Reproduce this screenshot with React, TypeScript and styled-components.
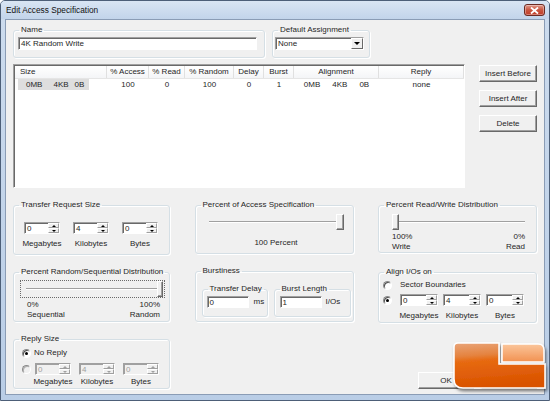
import * as React from 'react';
import styled, { createGlobalStyle } from 'styled-components';

const GlobalStyle = createGlobalStyle`
  html, body {
    margin: 0;
    padding: 0;
    background: #fff;
  }
  body {
    font-family: 'Liberation Sans', Arial, sans-serif;
    font-size: 8px;
    line-height: 10px;
    color: #262626;
  }
  * {
    box-sizing: border-box;
  }
`;

const Window = styled.div`
  position: relative;
  width: 550px;
  height: 401px;
  display: flex;
  flex-direction: column;
  background: linear-gradient(#cddcee, #b9cde6);
  border: 1px solid #4d5f78;
  border-radius: 5px 5px 0 0;
  overflow: hidden;
`;

const TitleBar = styled.div`
  height: 18px;
  display: flex;
  align-items: center;
  justify-content: space-between;
  padding: 0 4px 0 5px;
  background: linear-gradient(#d9e5f3, #c2d4ea);
`;

const Title = styled.span`
  font-size: 8.3px;
  color: #111;
`;

const CloseButton = styled.div`
  width: 21px;
  height: 12px;
  border: 1px solid #6b2a22;
  border-radius: 3px;
  background: linear-gradient(#e19a8c, #c9553f 50%, #c03c28);
  box-shadow: inset 0 0 0 1px rgba(255, 255, 255, 0.35);
  display: flex;
  align-items: center;
  justify-content: center;
`;

const Client = styled.div`
  flex: 1;
  margin: 0 4px 5px 4px;
  border: 1px solid #8a9cb5;
  background: #f0f0f0;
  padding: 5px 7px 0 7px;
  display: flex;
  flex-direction: column;
`;

const TopRow = styled.div`
  display: flex;
  gap: 7px;
`;

const Group = styled.fieldset<{ $w?: number; $h: number }>`
  margin: 0;
  padding: 0;
  min-width: 0;
  width: ${(p) => (p.$w ? `${p.$w}px` : 'auto')};
  height: ${(p) => p.$h}px;
  border: 1px solid #d5dfe5;
  border-radius: 3px;
  box-shadow: inset 1px 1px 0 #fff, 1px 1px 0 #fff;
`;

const Legend = styled.legend`
  margin-left: 5px;
  padding: 0 2px;
  height: 10px;
  line-height: 10px;
`;

const Body = styled.div<{ $pad: string }>`
  padding: ${(p) => p.$pad};
`;

const Field = styled.div<{ $w: number; $h?: number; $disabled?: boolean }>`
  width: ${(p) => p.$w}px;
  height: ${(p) => p.$h || 12}px;
  flex: none;
  display: flex;
  align-items: stretch;
  background: ${(p) => (p.$disabled ? '#f0f0f0' : '#fff')};
  color: ${(p) => (p.$disabled ? '#a0a0a0' : '#262626')};
  border: 1px solid;
  border-color: #a0a0a0 #fff #fff #a0a0a0;
  box-shadow: inset 1px 1px 0 ${(p) => (p.$disabled ? '#a0a0a0' : '#696969')};
  white-space: nowrap;
`;

const FieldText = styled.span`
  flex: 1;
  padding: 1px 0 0 2px;
  line-height: 10px;
`;

const DropButton = styled.div`
  width: 12px;
  background: #f0f0f0;
  border: 1px solid;
  border-color: #fff #696969 #696969 #fff;
  display: flex;
  align-items: center;
  justify-content: center;
  &::after {
    content: '';
    border-left: 3px solid transparent;
    border-right: 3px solid transparent;
    border-top: 3px solid #000;
  }
`;

const SpinButtons = styled.div`
  width: 11px;
  display: flex;
  flex-direction: column;
`;

const SpinHalf = styled.div<{ $up?: boolean; $disabled?: boolean }>`
  flex: 1;
  background: #f0f0f0;
  border: 1px solid;
  border-color: #fff #a0a0a0 #a0a0a0 #fff;
  display: flex;
  align-items: center;
  justify-content: center;
  &::after {
    content: '';
    border-left: 2px solid transparent;
    border-right: 2px solid transparent;
    ${(p) => (p.$up ? 'border-bottom' : 'border-top')}: 2px solid ${(p) => (p.$disabled ? '#a0a0a0' : '#000')};
  }
`;

const MidRow = styled.div`
  display: flex;
  margin-top: 6px;
`;

const ListView = styled.div`
  width: 452px;
  height: 124px;
  background: #fff;
  border: 1px solid;
  border-color: #a0a0a0 #fff #fff #a0a0a0;
  box-shadow: inset 1px 1px 0 #696969;
  padding: 1px 0 0 1px;
`;

const cols = '92px 42px 36px 49px 30px 30px 85px 85px';

const HeaderRow = styled.div`
  display: grid;
  grid-template-columns: ${cols};
  height: 13px;
  background: linear-gradient(#fff, #f4f5f7);
  border-bottom: 1px solid #e5e5e5;
`;

const HeaderCell = styled.div<{ $left?: boolean }>`
  border-right: 1px solid #e0e0e0;
  text-align: ${(p) => (p.$left ? 'left' : 'center')};
  padding-left: ${(p) => (p.$left ? '5px' : '0')};
  line-height: 12px;
  white-space: nowrap;
`;

const DataRow = styled.div`
  display: grid;
  grid-template-columns: ${cols};
  height: 11px;
  line-height: 11px;
`;

const Cell = styled.div`
  text-align: center;
  white-space: nowrap;
  display: flex;
  justify-content: center;
  gap: 12px;
`;

const Selection = styled.div`
  margin-left: 3px;
  width: 71px;
  background: #dedede;
  display: flex;
  padding-left: 8px;
  white-space: nowrap;
`;

const Gap = styled.span<{ $w: number }>`
  margin-left: ${(p) => p.$w}px;
`;

const ButtonCol = styled.div`
  display: flex;
  flex-direction: column;
  gap: 8px;
  margin: 1px 0 0 14px;
`;

const Button = styled.div<{ $w?: number }>`
  width: ${(p) => p.$w || 58}px;
  height: 17px;
  background: #f0f0f0;
  border: 1px solid;
  border-color: #fff #696969 #696969 #fff;
  box-shadow: inset -1px -1px 0 #a0a0a0;
  display: flex;
  align-items: center;
  justify-content: center;
  white-space: nowrap;
`;

const LowerGrid = styled.div`
  margin-top: 12px;
  display: grid;
  grid-template-columns: 157px 159px 159px;
  justify-content: space-between;
`;

const Column = styled.div<{ $gap: number }>`
  display: flex;
  flex-direction: column;
  gap: ${(p) => p.$gap}px;
`;

const SpinGrid = styled.div<{ $col: number; $gap: number }>`
  display: grid;
  grid-template-columns: repeat(3, ${(p) => p.$col}px);
  column-gap: ${(p) => p.$gap}px;
`;

const SpinCell = styled.div<{ $capGap: number }>`
  display: flex;
  flex-direction: column;
  align-items: center;
  gap: ${(p) => p.$capGap}px;
`;

const Caption = styled.span`
  white-space: nowrap;
`;

const FocusRect = styled.div`
  width: 145px;
  height: 18px;
  border: 1px dotted #6a6a6a;
  padding: 0 1px 0 5px;
  display: flex;
  align-items: center;
`;

const Slider = styled.div<{ $w?: number }>`
  width: ${(p) => (p.$w ? `${p.$w}px` : 'auto')};
  height: 16px;
  display: flex;
  align-items: center;
  flex: ${(p) => (p.$w ? 'none' : '1')};
`;

const Track = styled.div`
  flex: 1;
  height: 2px;
  border-top: 1px solid #a0a0a0;
  border-bottom: 1px solid #fff;
`;

const Thumb = styled.div<{ $w: number }>`
  width: ${(p) => p.$w}px;
  height: 16px;
  flex: none;
  background: #f0f0f0;
  border: 1px solid;
  border-color: #fff #696969 #696969 #fff;
  box-shadow: inset -1px -1px 0 #a0a0a0;
`;

const Ends = styled.div<{ $pad: string }>`
  display: flex;
  justify-content: space-between;
  padding: ${(p) => p.$pad};
`;

const EndLabel = styled.div<{ $right?: boolean }>`
  display: flex;
  flex-direction: column;
  text-align: ${(p) => (p.$right ? 'right' : 'left')};
`;

const CenterCaption = styled.div<{ $w: number }>`
  width: ${(p) => p.$w}px;
  margin-top: 8px;
  text-align: center;
`;

const SubRow = styled.div`
  display: flex;
  gap: 6px;
`;

const Line = styled.div<{ $gap: number; $top?: number }>`
  display: flex;
  align-items: center;
  gap: ${(p) => p.$gap}px;
  margin-top: ${(p) => p.$top || 0}px;
`;

const TopLine = styled(Line)`
  align-items: flex-start;
`;

const Radio = styled.span<{ $checked?: boolean; $disabled?: boolean }>`
  width: 9px;
  height: 9px;
  flex: none;
  border-radius: 50%;
  background: ${(p) => (p.$disabled ? '#f0f0f0' : '#fff')};
  border: 1px solid;
  border-color: #8a8a8a #fff #fff #8a8a8a;
  box-shadow: inset 1px 1px 0 ${(p) => (p.$disabled ? '#b0b0b0' : '#505050')};
  display: flex;
  align-items: center;
  justify-content: center;
  &::after {
    content: '';
    width: 3px;
    height: 3px;
    border-radius: 50%;
    background: ${(p) => (p.$checked ? '#000' : 'transparent')};
  }
`;

const RadioSlot = styled.div`
  height: 12px;
  display: flex;
  align-items: center;
`;

const ButtonRow = styled.div`
  margin-top: auto;
  display: flex;
  justify-content: flex-end;
  gap: 7px;
`;

const Watermark = styled.svg`
  position: absolute;
  right: 0;
  bottom: 0;
`;

const Spinner = ({ value, w, disabled }: { value: string; w: number; disabled?: boolean }) => (
  <Field $w={w} $disabled={disabled}>
    <FieldText>{value}</FieldText>
    <SpinButtons>
      <SpinHalf $up $disabled={disabled} />
      <SpinHalf $disabled={disabled} />
    </SpinButtons>
  </Field>
);

const SizeSpinners = ({ values, w, gap, capGap, disabled }: any) => (
  <SpinGrid $col={w} $gap={gap}>
    {['Megabytes', 'Kilobytes', 'Bytes'].map((label, i) => (
      <SpinCell key={label} $capGap={capGap}>
        <Spinner value={values[i]} w={w} disabled={disabled} />
        <Caption>{label}</Caption>
      </SpinCell>
    ))}
  </SpinGrid>
);

const headers = ['% Access', '% Read', '% Random', 'Delay', 'Burst', 'Alignment', 'Reply'];

const Logo = () => (
  <Watermark width="100" height="63" viewBox="0 0 100 63">
    <defs>
      <linearGradient id="lr-main" x1="0" y1="0" x2="0.15" y2="1">
        <stop offset="0" stopColor="#e9a57a" />
        <stop offset="0.3" stopColor="#e5833f" />
        <stop offset="0.42" stopColor="#e76a12" />
        <stop offset="1" stopColor="#d95200" />
      </linearGradient>
      <linearGradient id="lr-side" x1="0" y1="0" x2="0" y2="1">
        <stop offset="0" stopColor="#fbc69c" />
        <stop offset="1" stopColor="#f29150" />
      </linearGradient>
      <filter id="lr-shadow" x="-20%" y="-20%" width="140%" height="150%">
        <feDropShadow dx="1.5" dy="2.5" stdDeviation="1.6" floodColor="#000" floodOpacity="0.5" />
      </filter>
    </defs>
    <g filter="url(#lr-shadow)">
      <path d="M5 10 Q5 6 9 6 H50 V27 H96 V51 H14 Q5 51 5 42 Z" fill="url(#lr-main)" stroke="#fff" strokeWidth="1.5" />
      <path d="M53 7 H89 Q95 7 95 13 V25 H53 Z" fill="url(#lr-side)" stroke="#fff" strokeWidth="1.5" />
    </g>
  </Watermark>
);

export default function App() {
  return (
    <>
      <GlobalStyle />
      <Window>
        <TitleBar>
          <Title>Edit Access Specification</Title>
          <CloseButton>
            <svg width="9" height="7" viewBox="0 0 9 7">
              <path d="M1 0.5 L8 6.5 M8 0.5 L1 6.5" stroke="#fff" strokeWidth="1.8" />
            </svg>
          </CloseButton>
        </TitleBar>

        <Client>
          <TopRow>
            <Group $w={252} $h={33}>
              <Legend>Name</Legend>
              <Body $pad="2px 0 0 4px">
                <Field $w={239} $h={13}>
                  <FieldText>4K Random Write</FieldText>
                </Field>
              </Body>
            </Group>
            <Group $w={98} $h={33}>
              <Legend>Default Assignment</Legend>
              <Body $pad="2px 0 0 2px">
                <Field $w={89} $h={13}>
                  <FieldText>None</FieldText>
                  <DropButton />
                </Field>
              </Body>
            </Group>
          </TopRow>

          <MidRow>
            <ListView>
              <HeaderRow>
                <HeaderCell $left>Size</HeaderCell>
                {headers.map((h) => (
                  <HeaderCell key={h}>{h}</HeaderCell>
                ))}
              </HeaderRow>
              <DataRow>
                <div>
                  <Selection>
                    <span>0MB</span>
                    <Gap $w={11}>4KB</Gap>
                    <Gap $w={6}>0B</Gap>
                  </Selection>
                </div>
                <Cell>100</Cell>
                <Cell>0</Cell>
                <Cell>100</Cell>
                <Cell>0</Cell>
                <Cell>1</Cell>
                <Cell>
                  <span>0MB</span>
                  <span>4KB</span>
                  <span>0B</span>
                </Cell>
                <Cell>none</Cell>
              </DataRow>
            </ListView>
            <ButtonCol>
              <Button>Insert Before</Button>
              <Button>Insert After</Button>
              <Button>Delete</Button>
            </ButtonCol>
          </MidRow>

          <LowerGrid>
            <Column $gap={12}>
              <Group $h={55}>
                <Legend>Transfer Request Size</Legend>
                <Body $pad="12px 0 0 10px">
                  <SizeSpinners values={['0', '4', '0']} w={36} gap={13} capGap={5} />
                </Body>
              </Group>
              <Group $h={55}>
                <Legend>Percent Random/Sequential Distribution</Legend>
                <Body $pad="3px 0 0 6px">
                  <FocusRect>
                    <Track />
                    <Thumb $w={6} />
                  </FocusRect>
                  <Ends $pad="2px 9px 0 7px">
                    <EndLabel>
                      <span>0%</span>
                      <span>Sequential</span>
                    </EndLabel>
                    <EndLabel $right>
                      <span>100%</span>
                      <span>Random</span>
                    </EndLabel>
                  </Ends>
                </Body>
              </Group>
              <Group $h={55}>
                <Legend>Reply Size</Legend>
                <Body $pad="4px 0 0 8px">
                  <Line $gap={3}>
                    <Radio $checked />
                    <span>No Reply</span>
                  </Line>
                  <TopLine $gap={4} $top={5}>
                    <RadioSlot>
                      <Radio $disabled />
                    </RadioSlot>
                    <SizeSpinners values={['0', '4', '0']} w={36} gap={8} capGap={2} disabled />
                  </TopLine>
                </Body>
              </Group>
            </Column>

            <Column $gap={12}>
              <Group $h={54}>
                <Legend>Percent of Access Specification</Legend>
                <Body $pad="4px 0 0 13px">
                  <Slider $w={135}>
                    <Track />
                    <Thumb $w={8} />
                  </Slider>
                  <CenterCaption $w={135}>100 Percent</CenterCaption>
                </Body>
              </Group>
              <Group $h={56}>
                <Legend>Burstiness</Legend>
                <Body $pad="8px 0 0 6px">
                  <SubRow>
                    <Group $w={66} $h={33}>
                      <Legend>Transfer Delay</Legend>
                      <Body $pad="2px 0 0 4px">
                        <Line $gap={5}>
                          <Field $w={42}>
                            <FieldText>0</FieldText>
                          </Field>
                          <span>ms</span>
                        </Line>
                      </Body>
                    </Group>
                    <Group $w={77} $h={33}>
                      <Legend>Burst Length</Legend>
                      <Body $pad="2px 0 0 5px">
                        <Line $gap={4}>
                          <Field $w={42}>
                            <FieldText>1</FieldText>
                          </Field>
                          <span>I/Os</span>
                        </Line>
                      </Body>
                    </Group>
                  </SubRow>
                </Body>
              </Group>
            </Column>

            <Column $gap={14}>
              <Group $h={53}>
                <Legend>Percent Read/Write Distribution</Legend>
                <Body $pad="4px 11px 0 13px">
                  <Slider>
                    <Thumb $w={7} />
                    <Track />
                  </Slider>
                  <Ends $pad="2px 0 0 0">
                    <EndLabel>
                      <span>100%</span>
                      <span>Write</span>
                    </EndLabel>
                    <EndLabel $right>
                      <span>0%</span>
                      <span>Read</span>
                    </EndLabel>
                  </Ends>
                </Body>
              </Group>
              <Group $h={56}>
                <Legend>Align I/Os on</Legend>
                <Body $pad="3px 0 0 4px">
                  <Line $gap={8}>
                    <Radio />
                    <span>Sector Boundaries</span>
                  </Line>
                  <TopLine $gap={8} $top={4}>
                    <RadioSlot>
                      <Radio $checked />
                    </RadioSlot>
                    <SizeSpinners values={['0', '4', '0']} w={38} gap={5} capGap={5} />
                  </TopLine>
                </Body>
              </Group>
              <ButtonRow>
                <Button $w={56}>OK</Button>
                <Button $w={56}>Cancel</Button>
              </ButtonRow>
            </Column>
          </LowerGrid>
        </Client>
        <Logo />
      </Window>
    </>
  );
}
